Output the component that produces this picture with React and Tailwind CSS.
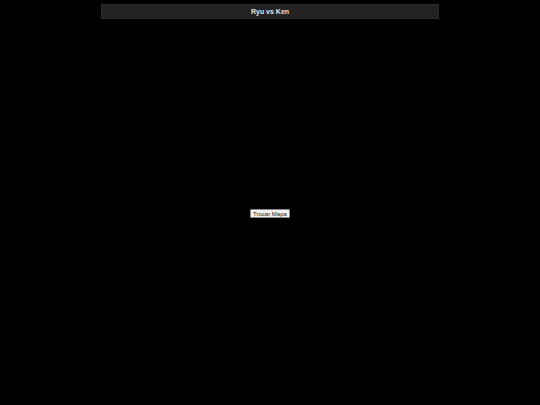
export default function App() {
  return (
    <main className="w-[540px] h-[405px] bg-black flex flex-col items-center font-['Liberation_Sans',Arial,sans-serif]">
      {/* Title bar */}
      <div className="mt-[4px] w-[338px] h-[15px] bg-[#222222] border border-[#2c2c2c] flex items-center justify-center">
        <h1 className="text-[7px] font-bold text-[#e8e8e8] leading-none">Ryu vs Ken</h1>
      </div>

      {/* Stage */}
      <div className="flex-1 w-full flex items-start justify-center pt-[190px]">
        <button className="h-[9px] px-[2px] bg-[#f0f0f0] border border-[#8a8a8a] rounded-[1px] text-[6px] leading-none text-[#222]">
          Trocar Mapa
        </button>
      </div>
    </main>
  );
}
